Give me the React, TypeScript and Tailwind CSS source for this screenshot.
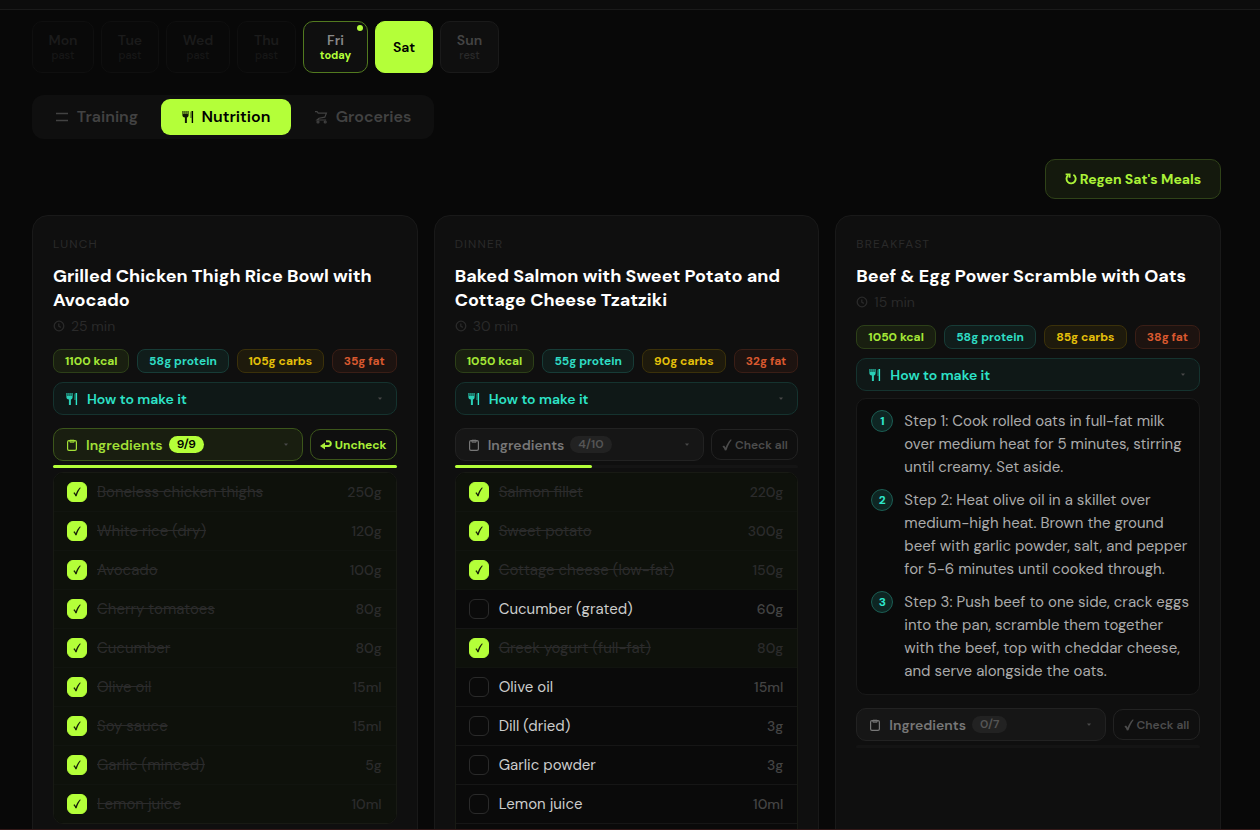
import { useState } from "react";

type Ingredient = { name: string; amount: string; done?: boolean };
type Meal = {
  id: string;
  slot: string;
  title: string;
  minutes: number;
  kcal: number;
  protein: number;
  carbs: number;
  fat: number;
  steps?: string[];
  total: number;
  items: Ingredient[];
  open: boolean;
};

const DAYS = [
  { name: "Mon", note: "past", kind: "past", width: "w-[62px]" },
  { name: "Tue", note: "past", kind: "past", width: "w-[58px]" },
  { name: "Wed", note: "past", kind: "past", width: "w-16" },
  { name: "Thu", note: "past", kind: "past", width: "w-[59px]" },
  { name: "Fri", note: "today", kind: "today", width: "w-[65px]" },
  { name: "Sat", note: "", kind: "active", width: "w-[58px]" },
  { name: "Sun", note: "rest", kind: "rest", width: "w-[59px]" },
];

const DAY_STYLES: Record<string, string> = {
  past: "border-[#0f0f0f] bg-[#090909] text-[#1b1b1b]",
  today: "border-[#527a1f] bg-[#0f0f0f] text-[#888888]",
  active: "border-[#b4ff39] bg-[#b4ff39] text-black",
  rest: "border-[#1a1a1a] bg-[#0f0f0f] text-[#444444]",
};

const NOTE_STYLES: Record<string, string> = {
  past: "font-medium text-[#171717]",
  today: "font-bold text-[#b4ff39]",
  active: "",
  rest: "font-medium text-[#2a2a2a]",
};

const MEALS: Meal[] = [
  {
    id: "lunch",
    slot: "Lunch",
    title: "Grilled Chicken Thigh Rice Bowl with Avocado",
    minutes: 25,
    kcal: 1100,
    protein: 58,
    carbs: 105,
    fat: 35,
    total: 9,
    open: true,
    items: [
      { name: "Boneless chicken thighs", amount: "250g", done: true },
      { name: "White rice (dry)", amount: "120g", done: true },
      { name: "Avocado", amount: "100g", done: true },
      { name: "Cherry tomatoes", amount: "80g", done: true },
      { name: "Cucumber", amount: "80g", done: true },
      { name: "Olive oil", amount: "15ml", done: true },
      { name: "Soy sauce", amount: "15ml", done: true },
      { name: "Garlic (minced)", amount: "5g", done: true },
      { name: "Lemon juice", amount: "10ml", done: true },
    ],
  },
  {
    id: "dinner",
    slot: "Dinner",
    title: "Baked Salmon with Sweet Potato and Cottage Cheese Tzatziki",
    minutes: 30,
    kcal: 1050,
    protein: 55,
    carbs: 90,
    fat: 32,
    total: 10,
    open: true,
    items: [
      { name: "Salmon fillet", amount: "220g", done: true },
      { name: "Sweet potato", amount: "300g", done: true },
      { name: "Cottage cheese (low-fat)", amount: "150g", done: true },
      { name: "Cucumber (grated)", amount: "60g" },
      { name: "Greek yogurt (full-fat)", amount: "80g", done: true },
      { name: "Olive oil", amount: "15ml" },
      { name: "Dill (dried)", amount: "3g" },
      { name: "Garlic powder", amount: "3g" },
      { name: "Lemon juice", amount: "10ml" },
    ],
  },
  {
    id: "breakfast",
    slot: "Breakfast",
    title: "Beef & Egg Power Scramble with Oats",
    minutes: 15,
    kcal: 1050,
    protein: 58,
    carbs: 85,
    fat: 38,
    total: 7,
    open: false,
    steps: [
      "Step 1: Cook rolled oats in full-fat milk over medium heat for 5 minutes, stirring until creamy. Set aside.",
      "Step 2: Heat olive oil in a skillet over medium-high heat. Brown the ground beef with garlic powder, salt, and pepper for 5-6 minutes until cooked through.",
      "Step 3: Push beef to one side, crack eggs into the pan, scramble them together with the beef, top with cheddar cheese, and serve alongside the oats.",
    ],
    items: [],
  },
];

function CutleryIcon() {
  return (
    <svg viewBox="0 0 12 14" className="h-3.5 w-3 shrink-0" fill="currentColor" aria-hidden="true">
      <path d="M.4 1h1.100v3h.9V1h1.100v3h.9V1h1.100v3h.5V1h.6v4.200c0 1.300-.7 2-1.700 2.200V13H2.900V7.400C1.200 7.200.4 6.500.4 5.200z" fillOpacity=".9" />
      <path d="M9.600 1v7H8.300V3.200C8.300 1.900 8.700 1.200 9.600 1z" fillOpacity=".5" />
      <path d="M9.700 1h1.400v12H9.700z" />
    </svg>
  );
}

function ClipboardIcon() {
  return (
    <svg viewBox="0 0 12 14" className="h-3.5 w-3 shrink-0" fill="none" stroke="currentColor" strokeWidth="1.2" aria-hidden="true">
      <rect x="1.6" y="2.6" width="8.8" height="9.8" rx="1.4" />
      <path d="M3.9 2.2h4.2v2H3.9z" fill="currentColor" fillOpacity=".4" strokeWidth=".9" />
    </svg>
  );
}

function ClockIcon() {
  return (
    <svg viewBox="0 0 12 12" className="size-3" fill="none" stroke="currentColor" strokeWidth="1.3" aria-hidden="true">
      <circle cx="6" cy="6" r="4.8" />
      <path d="M5.8 3.4v2.8l2 1.2" />
    </svg>
  );
}

function BarsIcon() {
  return (
    <svg viewBox="0 0 14 14" className="size-3.5" fill="none" stroke="currentColor" strokeWidth="1.3" aria-hidden="true">
      <path d="M1 3.5h12M1 10.5h12" />
    </svg>
  );
}

function CartIcon() {
  return (
    <svg viewBox="0 0 14 14" className="size-3.5" fill="none" stroke="currentColor" strokeWidth="1.2" aria-hidden="true">
      <path d="M1 1.600h2l1.200 1.600h8.200l-1.600 4L5 8.200 3 10h9.200" />
      <circle cx="4" cy="12" r="1" />
      <circle cx="11.200" cy="12" r="1" />
    </svg>
  );
}

function RefreshIcon() {
  return (
    <svg viewBox="0 0 12 12" className="size-3" fill="none" stroke="currentColor" strokeWidth="1.9" aria-hidden="true">
      <path d="M8.4 1.8a4.600 4.600 0 1 1-5.200.4" />
      <path d="M.6 1.400h4v3.400" />
    </svg>
  );
}

function ReturnIcon() {
  return (
    <svg viewBox="0 0 12 10" className="h-2.5 w-3" fill="none" stroke="currentColor" strokeWidth="2" aria-hidden="true">
      <path d="M6 1.2h2.400a2.300 2.300 0 0 1 0 4.800H3" />
      <path d="M5 2.600 0 6l5 3.400z" fill="currentColor" stroke="none" />
    </svg>
  );
}

function CheckIcon({ className }: { className: string }) {
  return (
    <svg viewBox="0 0 10 12" className={className} fill="currentColor" aria-hidden="true">
      <path d="M.4 7.400 2 6.400c.7.700 1.100 1.500 1.500 2.400C4.700 5.600 6.200 2.800 8.600.4L9.800.8C7.600 3.700 5.800 7 4.500 11.200l-1.600.2C2.400 9.900 1.700 8.500.4 7.400z" />
    </svg>
  );
}

function CaretIcon() {
  return (
    <svg viewBox="0 0 4 3" className="mr-0.5 ml-auto h-[3px] w-1 fill-[#484848]" aria-hidden="true">
      <path d="M0 .5h4L2.500 2.500h-1z" />
    </svg>
  );
}

function Macro({ text, tone }: { text: string; tone: string }) {
  return (
    <li className={`flex h-6 items-center rounded-lg border px-[11px] text-xs font-bold whitespace-nowrap ${tone}`}>
      {text}
    </li>
  );
}

function MealCard({ meal }: { meal: Meal }) {
  const [items, setItems] = useState(meal.items);
  const done = items.filter((item) => item.done).length;
  const complete = done === meal.total;
  const hasMore = items.length < meal.total;

  const toggle = (index: number) =>
    setItems(items.map((item, i) => (i === index ? { ...item, done: !item.done } : item)));
  const toggleAll = () => setItems(items.map((item) => ({ ...item, done: !complete })));

  return (
    <article className="rounded-2xl border border-[#191919] bg-[#0f0f0f] p-5">
      <p className="text-xs leading-4 tracking-widest text-[#2a2a2a] uppercase">{meal.slot}</p>
      <h2 className="mt-3 text-lg leading-6 font-bold text-white">{meal.title}</h2>
      <p className="mt-1 flex items-center gap-1.5 text-sm leading-5 text-[#2a2a2a]">
        <ClockIcon />
        {meal.minutes} min
      </p>
      <ul className="mt-[13px] flex justify-between">
        <Macro text={`${meal.kcal} kcal`} tone="border-[#2d4018] bg-[#191f10] text-[#a5e837]" />
        <Macro text={`${meal.protein}g protein`} tone="border-[#173c37] bg-[#101d1b] text-[#2fdcc3]" />
        <Macro text={`${meal.carbs}g carbs`} tone="border-[#3b310a] bg-[#1e1a0c] text-[#e5c00a]" />
        <Macro text={`${meal.fat}g fat`} tone="border-[#3a1e16] bg-[#1d1310] text-[#d9592f]" />
      </ul>
      <button type="button" className="mt-[9px] flex h-[33px] w-full items-center gap-[9px] rounded-[10px] border border-[#15332f] bg-[#0f1817] px-3 text-sm font-semibold text-[#2de3c8]">
        <CutleryIcon />
        How to make it
        <CaretIcon />
      </button>
      {meal.steps && (
        <ol className="mt-[7px] flex flex-col gap-2.5 rounded-[10px] border border-[#191919] bg-[#0a0a0a] py-[11px] pr-1 pl-3.5">
          {meal.steps.map((step, i) => (
            <li key={step} className="flex gap-[11px] text-[15px] leading-[23px] text-[#aaaaaa]">
              <span className="flex size-[22px] shrink-0 items-center justify-center rounded-full border border-[#1b5d53] bg-[#0e2623] text-xs font-bold text-[#2ee6cb]">
                {i + 1}
              </span>
              <span>{step}</span>
            </li>
          ))}
        </ol>
      )}
      <div className="mt-[13px] flex items-center gap-[7px]">
        <button
          type="button"
          className={`flex h-[33px] flex-1 items-center rounded-[10px] border px-3 text-sm font-semibold ${
            complete ? "border-[#3c561b] bg-[#191e10] text-[#a2e037]" : "border-[#222222] bg-[#161616] text-[#777777]"
          }`}
        >
          <ClipboardIcon />
          <span className="ml-2">Ingredients</span>
          <span
            className={`ml-1.5 rounded-full px-2 text-xs leading-[17px] ${
              complete ? "bg-[#b4ff39] text-black" : "bg-[#222222] text-[#555555]"
            }`}
          >
            {done}/{meal.total}
          </span>
          <CaretIcon />
        </button>
        <button
          type="button"
          onClick={toggleAll}
          className={`flex h-[31px] w-[87px] items-center justify-center gap-[3px] rounded-[10px] border text-xs ${
            complete ? "border-[#3c561b] font-bold text-[#a9ee38]" : "border-[#222222] font-semibold text-[#4c4c4c]"
          }`}
        >
          {complete ? <ReturnIcon /> : <CheckIcon className="h-3 w-2.5" />}
          {complete ? "Uncheck" : "Check all"}
        </button>
      </div>
      <div className="mt-1 h-[3px] rounded-full bg-[#141414]">
        <div className="h-full rounded-full bg-[#b4ff39]" style={{ width: `${(done / meal.total) * 100}%` }} />
      </div>
      {meal.open && (
        <ul className={`mt-1 overflow-hidden rounded-[10px] border border-[#181a14] bg-[#0a0a0a] ${hasMore ? "pb-10" : ""}`}>
          {items.map((item, i) => (
            <li
              key={item.name}
              className={`border-b ${hasMore ? "" : "last:border-b-0"} ${
                item.done ? "border-[#11140f] bg-[#0e110b]" : "border-[#161616]"
              }`}
            >
              <label className="relative flex h-[38px] items-center gap-2.5 pr-3.5 pl-[13px]">
                <input type="checkbox" checked={!!item.done} onChange={() => toggle(i)} className="sr-only" />
                <span
                  className={`flex size-5 shrink-0 items-center justify-center rounded-md border ${
                    item.done ? "border-[#b4ff39] bg-[#b4ff39] text-[#18220a]" : "border-[#2a2a2a]"
                  }`}
                >
                  {item.done && <CheckIcon className="h-2.5 w-2" />}
                </span>
                <span className={`flex-1 text-[15px] ${item.done ? "text-[#2b2b2b] line-through" : "text-[#cccccc]"}`}>
                  {item.name}
                </span>
                <span className={`text-sm font-medium ${item.done ? "text-[#2b2b2b]" : "text-[#444444]"}`}>{item.amount}</span>
              </label>
            </li>
          ))}
        </ul>
      )}
    </article>
  );
}

export default function App() {
  return (
    <div className="flex h-screen flex-col border-b border-[#331818] bg-[#080808] font-['DM_Sans','Open_Sans',sans-serif] text-white">
      <header className="h-2.5 shrink-0 border-b border-[#1a1a1a] bg-[#0c0c0c]" />
      <main className="min-h-0 flex-1 overflow-y-auto pt-[11px] pr-[39px] pb-6 pl-8 [scrollbar-width:none]">
        <nav aria-label="Days" className="flex gap-[7px]">
          {DAYS.map((day) => (
            <button
              key={day.name}
              type="button"
              className={`relative flex h-[52px] flex-col items-center justify-center rounded-[10px] border text-sm leading-4 font-semibold ${day.width} ${DAY_STYLES[day.kind]}`}
            >
              {day.name}
              {day.note && <span className={`text-[11px] leading-[15px] ${NOTE_STYLES[day.kind]}`}>{day.note}</span>}
              {day.kind === "today" && <span className="absolute top-[3px] right-1 size-1.5 rounded-full bg-[#b4ff39]" />}
            </button>
          ))}
        </nav>
        <div role="tablist" className="mt-[22px] flex h-11 w-[402px] items-center rounded-xl bg-[#0f0f0f] text-base font-semibold text-[#424242]">
          <button type="button" role="tab" aria-selected="false" className="flex h-9 w-[129px] items-center justify-center gap-2">
            <BarsIcon />
            Training
          </button>
          <button type="button" role="tab" aria-selected="true" className="flex h-9 w-[130px] items-center justify-center gap-2 rounded-[9px] bg-[#b4ff39] text-black">
            <CutleryIcon />
            Nutrition
          </button>
          <button type="button" role="tab" aria-selected="false" className="flex h-9 flex-1 items-center justify-center gap-2">
            <CartIcon />
            Groceries
          </button>
        </div>
        <div className="mt-5 flex justify-end">
          <button type="button" className="flex h-10 w-44 items-center justify-center gap-[3px] rounded-[10px] border border-[#2f4218] bg-[#14190d] text-sm font-bold text-[#abf238]">
            <RefreshIcon />
            Regen Sat's Meals
          </button>
        </div>
        <section className="mt-4 grid grid-cols-3 gap-4">
          {MEALS.map((meal) => (
            <MealCard key={meal.id} meal={meal} />
          ))}
        </section>
      </main>
    </div>
  );
}
